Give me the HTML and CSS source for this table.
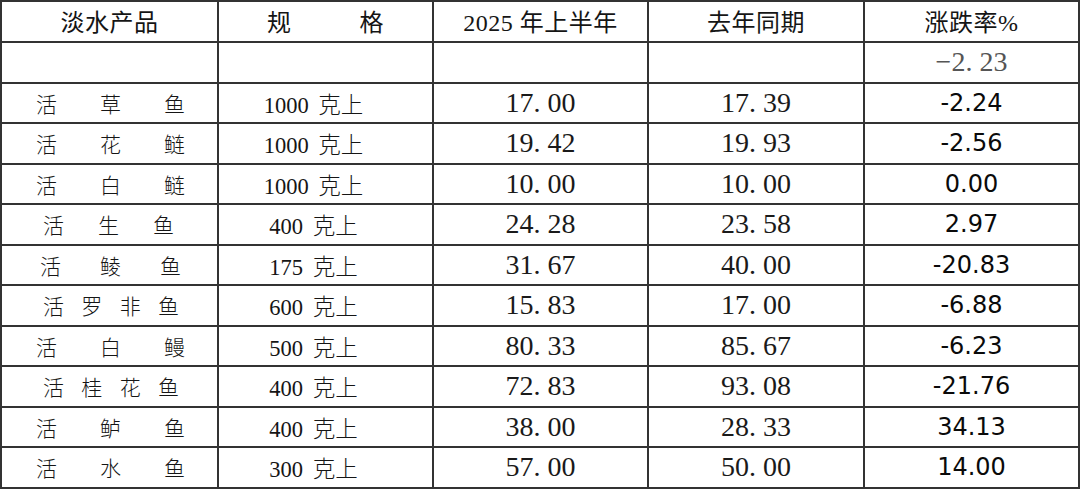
FILE: index.html
```html
<!DOCTYPE html>
<html lang="zh-CN">
<head>
<meta charset="utf-8">
<title>淡水产品价格</title>
<link rel="stylesheet" href="styles.css">
</head>
<body>
<div class="sheet">
  <div class="cell head head-name">淡水产品</div>
  <div class="cell head head-spec"><span>规</span><span>格</span></div>
  <div class="cell head">2025 年上半年</div>
  <div class="cell head">去年同期</div>
  <div class="cell head">涨跌率%</div>

  <div class="row-first cell"></div>
  <div class="row-first cell"></div>
  <div class="row-first cell"></div>
  <div class="row-first cell"></div>
  <div class="row-first cell serif-num gray">−2<span class="dot">.</span>23</div>

  <div class="cell name wide"><span>活</span><span>草</span><span>鱼</span></div>
  <div class="cell spec">1000 克上</div>
  <div class="cell serif-num">17<span class="dot">.</span>00</div>
  <div class="cell serif-num">17<span class="dot">.</span>39</div>
  <div class="cell sans-num">-2.24</div>

  <div class="cell name wide"><span>活</span><span>花</span><span>鲢</span></div>
  <div class="cell spec">1000 克上</div>
  <div class="cell serif-num">19<span class="dot">.</span>42</div>
  <div class="cell serif-num">19<span class="dot">.</span>93</div>
  <div class="cell sans-num">-2.56</div>

  <div class="cell name wide"><span>活</span><span>白</span><span>鲢</span></div>
  <div class="cell spec">1000 克上</div>
  <div class="cell serif-num">10<span class="dot">.</span>00</div>
  <div class="cell serif-num">10<span class="dot">.</span>00</div>
  <div class="cell sans-num">0.00</div>

  <div class="cell name narrow"><span>活</span><span>生</span><span>鱼</span></div>
  <div class="cell spec">400 克上</div>
  <div class="cell serif-num">24<span class="dot">.</span>28</div>
  <div class="cell serif-num">23<span class="dot">.</span>58</div>
  <div class="cell sans-num">2.97</div>

  <div class="cell name mid"><span>活</span><span>鲮</span><span>鱼</span></div>
  <div class="cell spec">175 克上</div>
  <div class="cell serif-num">31<span class="dot">.</span>67</div>
  <div class="cell serif-num">40<span class="dot">.</span>00</div>
  <div class="cell sans-num">-20.83</div>

  <div class="cell name four"><span>活</span><span>罗</span><span>非</span><span>鱼</span></div>
  <div class="cell spec">600 克上</div>
  <div class="cell serif-num">15<span class="dot">.</span>83</div>
  <div class="cell serif-num">17<span class="dot">.</span>00</div>
  <div class="cell sans-num">-6.88</div>

  <div class="cell name wide"><span>活</span><span>白</span><span>鳗</span></div>
  <div class="cell spec">500 克上</div>
  <div class="cell serif-num">80<span class="dot">.</span>33</div>
  <div class="cell serif-num">85<span class="dot">.</span>67</div>
  <div class="cell sans-num">-6.23</div>

  <div class="cell name four"><span>活</span><span>桂</span><span>花</span><span>鱼</span></div>
  <div class="cell spec">400 克上</div>
  <div class="cell serif-num">72<span class="dot">.</span>83</div>
  <div class="cell serif-num">93<span class="dot">.</span>08</div>
  <div class="cell sans-num">-21.76</div>

  <div class="cell name wide"><span>活</span><span>鲈</span><span>鱼</span></div>
  <div class="cell spec">400 克上</div>
  <div class="cell serif-num">38<span class="dot">.</span>00</div>
  <div class="cell serif-num">28<span class="dot">.</span>33</div>
  <div class="cell sans-num">34.13</div>

  <div class="cell name wide"><span>活</span><span>水</span><span>鱼</span></div>
  <div class="cell spec">300 克上</div>
  <div class="cell serif-num">57<span class="dot">.</span>00</div>
  <div class="cell serif-num">50<span class="dot">.</span>00</div>
  <div class="cell sans-num">14.00</div>
</div>
</body>
</html>
```

FILE: styles.css
```css
* { box-sizing: border-box; }

html, body {
  margin: 0;
  padding: 0;
  background: #ffffff;
}

.sheet {
  display: grid;
  grid-template-columns: 217px 215px 215px 216px 215px;
  grid-template-rows: 41px repeat(11, 40.5px);
  width: 1080px;
  border-left: 2px solid #333;
  border-top: 2px solid #333;
  color: #151515;
}

.cell {
  display: flex;
  align-items: center;
  justify-content: center;
  border-right: 2px solid #333;
  border-bottom: 2px solid #333;
  white-space: nowrap;
}

.head {
  font-family: "Liberation Serif", "Noto Sans CJK SC", serif;
  font-size: 24px;
  font-weight: 400;
  letter-spacing: 0.5px;
  padding-bottom: 3px;
}

.head-spec {
  justify-content: space-between;
  padding: 0 48px 3px 48px;
}

.name {
  font-family: "Noto Sans CJK SC", sans-serif;
  font-weight: 300;
  font-size: 21px;
  justify-content: space-between;
}

.name.wide { padding: 0 32px 0 34px; }
.name.mid { padding: 0 36px 0 38px; }
.name.narrow { padding: 0 43px 0 41px; }
.name.four { padding: 0 38px 0 41px; }

.spec {
  font-family: "Liberation Serif", "Noto Sans CJK SC", serif;
  font-size: 22.5px;
  font-weight: 300;
  word-spacing: 4px;
  padding-right: 24px;
}

.serif-num {
  font-family: "Liberation Serif", serif;
  font-size: 28px;
  color: #1a1a1a;
}

.serif-num .dot {
  letter-spacing: 7px;
}

.gray {
  color: #555;
}

.sans-num {
  font-family: "DejaVu Sans", sans-serif;
  font-size: 24px;
  color: #0a0a0a;
}
```
